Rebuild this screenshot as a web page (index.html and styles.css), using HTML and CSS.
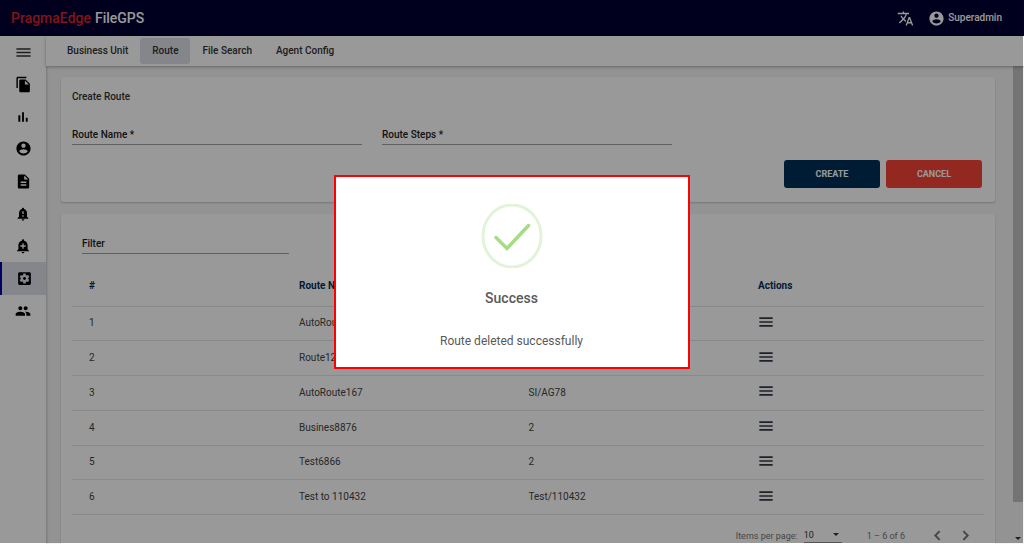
FILE: index.html
```
<!DOCTYPE html>
<html lang="en">
<head>
    <meta charset="UTF-8">
    <meta name="viewport" content="width=device-width, initial-scale=1.0">
    <title>FileGPS - Route</title>
    <link rel="stylesheet" href="styles.css">
</head>
<body>

    <header class="topbar">
        <a class="brand" href="#"><span class="brand-logo">PragmaEdge</span> <span class="brand-name">FileGPS</span></a>
        <div class="topbar-right">
            <button class="icon-btn" aria-label="Language">
                <svg class="icon-lg" viewBox="0 0 24 24"><path d="M12.87 15.07l-2.54-2.51.03-.03c1.74-1.94 2.98-4.17 3.71-6.53H17V4h-7V2H8v2H1v1.99h11.17C11.5 7.92 10.44 9.75 9 11.35 8.07 10.32 7.3 9.19 6.69 8h-2c.73 1.63 1.73 3.17 2.98 4.56l-5.09 5.02L4 19l5-5 3.11 3.11.76-2.04zM18.5 10h-2L12 22h2l1.12-3h4.75L21 22h2l-4.5-12zm-2.62 7l1.62-4.33L19.12 17h-3.24z"/></svg>
            </button>
            <button class="user-btn">
                <svg class="icon-lg" viewBox="0 0 24 24"><path d="M12 2C6.48 2 2 6.48 2 12s4.48 10 10 10 10-4.48 10-10S17.52 2 12 2zm0 3c1.66 0 3 1.34 3 3s-1.34 3-3 3-3-1.34-3-3 1.34-3 3-3zm0 14.2c-2.5 0-4.71-1.28-6-3.22.03-1.99 4-3.08 6-3.08 1.99 0 5.97 1.09 6 3.08-1.29 1.94-3.5 3.22-6 3.22z"/></svg>
                Superadmin
            </button>
        </div>
    </header>

    <div class="layout">
        <aside class="sidebar">
            <button class="menu-toggle" aria-label="Toggle menu">
                <svg class="icon-lg" viewBox="0 0 24 24"><path d="M2 18h20v-2H2v2zm0-5h20v-2H2v2zm0-7v2h20V6H2z"/></svg>
            </button>
            <nav class="side-nav">
                <a href="#" aria-label="Files"><svg class="icon-lg" viewBox="0 0 24 24"><path d="M16 1H4c-1.1 0-2 .9-2 2v14h2V3h12V1zm-1 4l6 6v10c0 1.1-.9 2-2 2H7.99C6.89 23 6 22.1 6 21l.01-14c0-1.1.89-2 1.99-2h7zm-1 7h5.5L14 6.5V12z"/></svg></a>
                <a href="#" aria-label="Reports"><svg class="icon" viewBox="0 0 24 24"><path d="M5 9.2h3V19H5V9.2zM10.6 5h2.8v14h-2.8V5zm5.6 8H19v6h-2.8v-6z"/></svg></a>
                <a href="#" aria-label="Account"><svg class="icon-lg" viewBox="0 0 24 24"><path d="M12 2C6.48 2 2 6.48 2 12s4.48 10 10 10 10-4.48 10-10S17.52 2 12 2zm0 3c1.66 0 3 1.34 3 3s-1.34 3-3 3-3-1.34-3-3 1.34-3 3-3zm0 14.2c-2.5 0-4.71-1.28-6-3.22.03-1.99 4-3.08 6-3.08 1.99 0 5.97 1.09 6 3.08-1.29 1.94-3.5 3.22-6 3.22z"/></svg></a>
                <a href="#" aria-label="Documents"><svg class="icon-lg" viewBox="0 0 24 24"><path d="M14 2H6c-1.1 0-1.99.9-1.99 2L4 20c0 1.1.89 2 1.99 2H18c1.1 0 2-.9 2-2V8l-6-6zm2 16H8v-2h8v2zm0-4H8v-2h8v2zm-3-5V3.5L18.5 9H13z"/></svg></a>
                <a href="#" aria-label="Alerts"><svg class="icon" viewBox="0 0 24 24"><path d="M18 16v-5c0-3.07-1.64-5.64-4.5-6.32V4c0-.83-.67-1.5-1.5-1.5s-1.5.67-1.5 1.5v.68C7.63 5.36 6 7.92 6 11v5l-2 2v1h16v-1l-2-2zm-5 0h-2v-2h2v2zm0-4h-2V8h2v4zm-1 10c1.1 0 2-.9 2-2h-4c0 1.1.89 2 2 2z"/></svg></a>
                <a href="#" aria-label="Add alert"><svg class="icon" viewBox="0 0 24 24"><path d="M10.01 21.01c0 1.1.89 1.99 1.99 1.99s1.99-.89 1.99-1.99h-3.98zm8.87-4.19V11c0-3.25-2.25-5.97-5.29-6.69v-.72C13.59 2.71 12.88 2 12 2s-1.59.71-1.59 1.59v.72C7.37 5.03 5.12 7.75 5.12 11v5.82L3 18.94V20h18v-1.06l-2.12-2.12zM16 13.01h-3v3h-2v-3H8V11h3V8h2v3h3v2.01z"/></svg></a>
                <a href="#" class="active" aria-label="Settings"><svg class="icon-lg" viewBox="0 0 24 24"><path d="M12 10c-1.1 0-2 .9-2 2s.9 2 2 2 2-.9 2-2-.9-2-2-2zm7-7H5c-1.11 0-2 .9-2 2v14c0 1.1.89 2 2 2h14c1.11 0 2-.9 2-2V5c0-1.1-.89-2-2-2zm-1.75 9c0 .23-.02.46-.05.68l1.48 1.16c.13.11.17.3.08.45l-1.4 2.42c-.09.15-.27.21-.43.15l-1.74-.7c-.36.28-.76.51-1.18.69l-.26 1.85c-.03.17-.18.3-.35.3h-2.8c-.17 0-.32-.13-.35-.29l-.26-1.85c-.43-.18-.82-.41-1.18-.69l-1.74.7c-.16.06-.34 0-.43-.15l-1.4-2.42c-.09-.15-.05-.34.08-.45l1.48-1.16c-.03-.23-.05-.46-.05-.69 0-.23.02-.46.05-.68l-1.48-1.16c-.13-.11-.17-.3-.08-.45l1.4-2.42c.09-.15.27-.21.43-.15l1.74.7c.36-.28.76-.51 1.18-.69l.26-1.85c.03-.17.18-.3.35-.3h2.8c.17 0 .32.13.35.29l.26 1.85c.43.18.82.41 1.18.69l1.74-.7c.16-.06.34 0 .43.15l1.4 2.42c.09.15.05.34-.08.45l-1.48 1.16c.03.23.05.46.05.69z"/></svg></a>
                <a href="#" aria-label="Users"><svg class="icon" viewBox="0 0 24 24"><path d="M16 11c1.66 0 2.99-1.34 2.99-3S17.66 5 16 5c-1.66 0-3 1.34-3 3s1.34 3 3 3zm-8 0c1.66 0 2.99-1.34 2.99-3S9.66 5 8 5C6.34 5 5 6.34 5 8s1.34 3 3 3zm0 2c-2.33 0-7 1.17-7 3.5V19h14v-2.5c0-2.33-4.67-3.5-7-3.5zm8 0c-.29 0-.62.02-.97.05 1.16.84 1.97 1.97 1.97 3.45V19h6v-2.5c0-2.33-4.67-3.5-7-3.5z"/></svg></a>
            </nav>
        </aside>

        <div class="page">
            <nav class="tabs">
                <a href="#">Business Unit</a>
                <a href="#" class="active">Route</a>
                <a href="#">File Search</a>
                <a href="#">Agent Config</a>
            </nav>

            <div class="scroll-area">
                <main class="content">
                    <form class="card route-form">
                        <h1>Create Route</h1>
                        <div class="fields">
                            <div class="field">
                                <label for="routeName">Route Name *</label>
                                <input type="text" id="routeName">
                            </div>
                            <div class="field">
                                <label for="routeSteps">Route Steps *</label>
                                <input type="text" id="routeSteps">
                            </div>
                        </div>
                        <div class="form-actions">
                            <button type="button" class="btn btn-create">CREATE</button>
                            <button type="button" class="btn btn-cancel">CANCEL</button>
                        </div>
                    </form>

                    <section class="card route-list">
                        <div class="field filter">
                            <label for="filter">Filter</label>
                            <input type="text" id="filter">
                        </div>
                        <table>
                            <thead>
                                <tr><th class="col-num">#</th><th>Route Name</th><th>Route Steps</th><th class="col-actions">Actions</th></tr>
                            </thead>
                            <tbody>
                                <tr><td>1</td><td>AutoRoute1</td><td>2</td><td><button class="row-menu" aria-label="Actions"><svg class="icon" viewBox="0 0 24 24"><path d="M2 19h20v-2.500H2V19zm0-5.750h20v-2.500H2v2.500zM2 5v2.500h20V5H2z"/></svg></button></td></tr>
                                <tr><td>2</td><td>Route123</td><td>2</td><td><button class="row-menu" aria-label="Actions"><svg class="icon" viewBox="0 0 24 24"><path d="M2 19h20v-2.500H2V19zm0-5.750h20v-2.500H2v2.500zM2 5v2.500h20V5H2z"/></svg></button></td></tr>
                                <tr><td>3</td><td>AutoRoute167</td><td>SI/AG78</td><td><button class="row-menu" aria-label="Actions"><svg class="icon" viewBox="0 0 24 24"><path d="M2 19h20v-2.500H2V19zm0-5.750h20v-2.500H2v2.500zM2 5v2.500h20V5H2z"/></svg></button></td></tr>
                                <tr><td>4</td><td>Busines8876</td><td>2</td><td><button class="row-menu" aria-label="Actions"><svg class="icon" viewBox="0 0 24 24"><path d="M2 19h20v-2.500H2V19zm0-5.750h20v-2.500H2v2.500zM2 5v2.500h20V5H2z"/></svg></button></td></tr>
                                <tr><td>5</td><td>Test6866</td><td>2</td><td><button class="row-menu" aria-label="Actions"><svg class="icon" viewBox="0 0 24 24"><path d="M2 19h20v-2.500H2V19zm0-5.750h20v-2.500H2v2.500zM2 5v2.500h20V5H2z"/></svg></button></td></tr>
                                <tr><td>6</td><td>Test to 110432</td><td>Test/110432</td><td><button class="row-menu" aria-label="Actions"><svg class="icon" viewBox="0 0 24 24"><path d="M2 19h20v-2.500H2V19zm0-5.750h20v-2.500H2v2.500zM2 5v2.500h20V5H2z"/></svg></button></td></tr>
                            </tbody>
                        </table>
                        <div class="paginator">
                            <label for="pageSize">Items per page:</label>
                            <div class="page-size">
                                <select id="pageSize">
                                    <option>10</option>
                                    <option>25</option>
                                    <option>50</option>
                                </select>
                            </div>
                            <span class="range">1 – 6 of 6</span>
                            <button class="page-btn" aria-label="Previous page"><svg class="icon-lg" viewBox="0 0 24 24"><path d="M16 6.800L14 5l-7 7 7 7 2-1.800L10.800 12z"/></svg></button>
                            <button class="page-btn" aria-label="Next page"><svg class="icon-lg" viewBox="0 0 24 24"><path d="M10 5L8 6.800 13.200 12 8 17.200 10 19l7-7z"/></svg></button>
                        </div>
                    </section>
                </main>
                <div class="scrollbar">
                    <div class="thumb"></div>
                    <div class="arrow"></div>
                </div>
            </div>
        </div>
    </div>

    <div class="overlay">
        <div class="modal" role="dialog" aria-labelledby="modalTitle">
            <svg class="success-icon" viewBox="0 0 62 64">
                <ellipse cx="31" cy="32" rx="29" ry="31" fill="none" stroke="#e2f3d8" stroke-width="3"/>
                <path d="M15 33.5L26 44.5L47.5 21.5" fill="none" stroke="#a5dc86" stroke-width="3.5" stroke-linecap="round" stroke-linejoin="miter"/>
            </svg>
            <h2 id="modalTitle">Success</h2>
            <p>Route deleted successfully</p>
        </div>
    </div>

</body>
</html>
```

FILE: styles.css
```
* {
    box-sizing: border-box;
}
body {
    margin: 0;
    height: 100vh;
    overflow: hidden;
    display: flex;
    flex-direction: column;
    font-family: Roboto, "Liberation Sans", sans-serif;
    font-size: 10px;
    line-height: 14px;
    color: #333;
    background-color: #fff;
}
a {
    color: inherit;
    text-decoration: none;
}
button {
    font: inherit;
    color: inherit;
    background: none;
    border: none;
    padding: 0;
    cursor: pointer;
}
svg {
    display: block;
    fill: currentColor;
}
.icon {
    width: 16px;
    height: 16px;
}
.icon-lg {
    width: 17px;
    height: 17px;
}

/* Header */
.topbar {
    flex: none;
    height: 36px;
    padding: 0 22px 0 11px;
    display: flex;
    align-items: center;
    justify-content: space-between;
    background-color: #000033;
    color: #fff;
}
.brand {
    display: flex;
    align-items: center;
    gap: 4px;
}
.brand-logo {
    font-size: 14px;
    font-weight: 500;
    color: #d9232e;
}
.brand-name {
    font-size: 14px;
    font-weight: 500;
}
.topbar-right {
    display: flex;
    align-items: center;
    gap: 14px;
}
.user-btn {
    display: flex;
    align-items: center;
    gap: 3px;
    font-weight: 500;
}

/* Sidebar */
.layout {
    flex: 1;
    min-height: 0;
    display: flex;
}
.sidebar {
    flex: none;
    width: 46px;
    background-color: #fff;
    box-shadow: 1px 0 2px rgba(0, 0, 0, 0.2);
    z-index: 1;
}
.menu-toggle {
    width: 100%;
    height: 32px;
    display: flex;
    align-items: center;
    justify-content: center;
}
.side-nav {
    height: 259px;
    display: flex;
    flex-direction: column;
}
.side-nav a {
    flex: 1;
    display: flex;
    align-items: center;
    justify-content: center;
    color: #000;
}
.side-nav a.active {
    background-color: #dcdfea;
    border-left: 2px solid #0000a0;
}

/* Tabs */
.page {
    flex: 1;
    min-width: 0;
    display: flex;
    flex-direction: column;
}
.tabs {
    flex: none;
    height: 30px;
    padding-left: 9px;
    display: flex;
    align-items: center;
    font-weight: 500;
    background-color: #fff;
    box-shadow: 0 1px 3px rgba(0, 0, 0, 0.3);
    z-index: 1;
}
.tabs a {
    padding: 6px 12px;
    border-radius: 3px;
}
.tabs a.active {
    background-color: #dcdfea;
}

/* Content */
.scroll-area {
    flex: 1;
    min-height: 0;
    display: flex;
    background-color: #f5f5f5;
}
.content {
    flex: 1;
    min-width: 0;
    overflow: hidden;
    padding: 11px 18px 0 15px;
}
.card {
    background-color: #fff;
    border-radius: 3px;
    box-shadow: 0 1px 2px rgba(0, 0, 0, 0.2);
}
.route-form {
    padding: 13px 13px 14px 11px;
    margin-bottom: 12px;
}
.route-form h1 {
    margin: 0 0 24px;
    font-size: 10px;
    font-weight: 500;
}
.fields {
    display: grid;
    grid-template-columns: repeat(3, 1fr);
    gap: 20px;
}
.field {
    display: flex;
    flex-direction: column;
    position: relative;
    color: #222;
    font-weight: 500;
}
.field input {
    position: absolute;
    inset: 0;
    width: 100%;
    font: inherit;
    background: none;
    border: none;
    border-bottom: 1px solid #a0a0a0;
}
.field label {
    padding-bottom: 3px;
}
.form-actions {
    display: flex;
    justify-content: flex-end;
    gap: 6px;
    margin-top: 15px;
}
.btn {
    width: 96px;
    height: 28px;
    border-radius: 3px;
    color: #fff;
    font-size: 9px;
    font-weight: 700;
}
.btn-create {
    background-color: #003058;
}
.btn-cancel {
    background-color: #f44336;
}
.route-list {
    padding: 23px 11px 0;
}
.filter {
    width: 207px;
    margin: 0 0 12px 10px;
}

/* Table */
table {
    width: 100%;
    height: 249px;
    table-layout: fixed;
    border-collapse: collapse;
}
th, td {
    padding: 0;
    text-align: left;
    border-bottom: 1px solid #e4e4e4;
}
th {
    height: 40px;
    font-weight: 700;
    color: #003058;
}
td {
    color: #444;
}
.col-num {
    width: 227px;
}
.col-actions {
    width: 226px;
}
th:first-child, td:first-child {
    padding-left: 17px;
}
.row-menu {
    display: block;
    padding-bottom: 3px;
    color: #333a48;
}

/* Paginator */
.paginator {
    display: flex;
    align-items: center;
    justify-content: flex-end;
    height: 41px;
    padding-right: 10px;
    font-size: 9px;
    color: #757575;
}
.page-size {
    position: relative;
    width: 38px;
    margin: 0 25px 0 6px;
    border-bottom: 1px solid #8c8c8c;
}
.page-size select {
    width: 100%;
    appearance: none;
    background: none;
    border: none;
    font: inherit;
    color: #333;
    padding: 0;
}
.page-size::after {
    content: "";
    position: absolute;
    right: 3px;
    top: 5px;
    border: 3px solid transparent;
    border-top-color: #333;
    border-bottom: none;
}
.range {
    margin-right: 24px;
}
.page-btn + .page-btn {
    margin-left: 11px;
}

/* Scrollbar */
.scrollbar {
    flex: none;
    width: 10px;
    margin-right: 1px;
    display: flex;
    flex-direction: column;
    justify-content: space-between;
    align-items: center;
    padding-bottom: 4px;
}
.thumb {
    width: 100%;
    height: 92%;
    background-color: #c1c1c1;
}
.arrow {
    border: 3px solid transparent;
    border-top-color: #333;
    border-bottom: none;
}

/* Success popup */
.overlay {
    position: fixed;
    inset: 0 1px 1px 0;
    z-index: 10;
    display: flex;
    align-items: center;
    justify-content: center;
    background-color: rgba(0, 0, 0, 0.4);
}
.modal {
    width: 356px;
    padding: 27px 20px 18px;
    border: 2px solid #ff0000;
    background-color: #fff;
    text-align: center;
    color: #595959;
}
.success-icon {
    width: 62px;
    height: 64px;
    margin: 0 auto;
}
.modal h2 {
    margin: 21px 0 26px;
    font-size: 14px;
    line-height: 18px;
    font-weight: 500;
}
.modal p {
    margin: 0;
    font-size: 12px;
    line-height: 16px;
}
```
